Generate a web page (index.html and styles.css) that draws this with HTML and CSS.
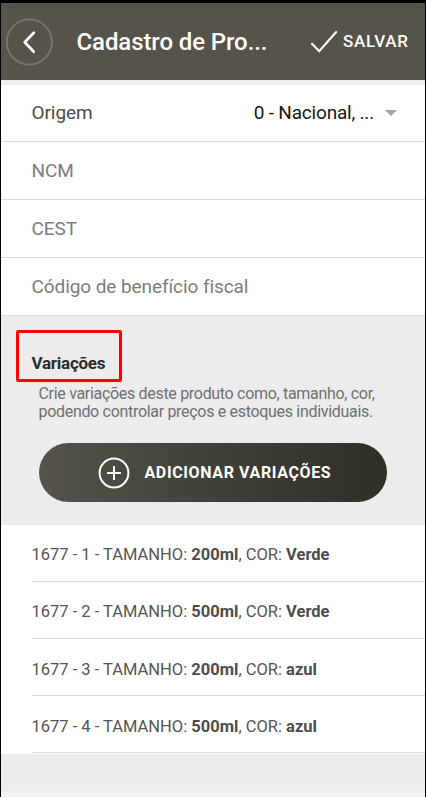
FILE: index.html
```html
<!DOCTYPE html>
<html lang="pt-BR">
<head>
<meta charset="utf-8">
<meta name="viewport" content="width=device-width">
<title>Cadastro de Produto</title>
<link rel="stylesheet" href="styles.css">
</head>
<body>
<div class="app">
  <header class="topbar">
    <button class="back" aria-label="Voltar">
      <svg width="48" height="48" viewBox="0 0 48 48" fill="none"><circle cx="24.3" cy="24" r="22.6" stroke="#79776f" stroke-width="1.8"/><path d="M28.8 14.8 19.7 24.2 28.8 33.8" stroke="#fff" stroke-width="2.7" stroke-linecap="round" stroke-linejoin="round"/></svg>
    </button>
    <h1 class="title">Cadastro de Pro...</h1>
    <button class="save">
      <svg width="28" height="24" viewBox="0 0 28 24" fill="none"><path d="M2 13.8 9.2 21.3 26.2 2" stroke="#fff" stroke-width="2.1" stroke-linecap="round"/></svg>
      <span>SALVAR</span>
    </button>
  </header>
  <section class="fields">
    <div class="field origin"><span>Origem</span><span class="value">0 - Nacional, ...</span><i class="caret"></i></div>
    <div class="field">NCM</div>
    <div class="field">CEST</div>
    <div class="field">Código de benefício fiscal</div>
  </section>
  <section class="intro">
    <div class="highlight"><h2>Variações</h2></div>
    <p>Crie variações deste produto como, tamanho, cor,<br>podendo controlar preços e estoques individuais.</p>
    <button class="add">
      <svg width="32" height="32" viewBox="0 0 32 32" fill="none" stroke="#fff" stroke-width="2"><circle cx="16" cy="16" r="14.4"/><path d="M9 16h14M16 9v14"/></svg>
      <span>ADICIONAR VARIAÇÕES</span>
    </button>
  </section>
  <ul class="variations">
    <li>1677 - 1 - TAMANHO: <b>200ml</b>, COR: <b>Verde</b></li>
    <li>1677 - 2 - TAMANHO: <b>500ml</b>, COR: <b>Verde</b></li>
    <li>1677 - 3 - TAMANHO: <b>200ml</b>, COR: <b>azul</b></li>
    <li>1677 - 4 - TAMANHO: <b>500ml</b>, COR: <b>azul</b></li>
  </ul>
  <footer class="bottom"></footer>
</div>
</body>
</html>
```
FILE: styles.css
```css
* { box-sizing: border-box; }
body { margin: 0; font-family: Roboto, "Liberation Sans", sans-serif; }
button { border: 0; padding: 0; background: none; color: #fff; font-family: inherit; }
svg { display: block; flex: none; }
.app {
  width: 426px; height: 797px; overflow: hidden;
  display: flex; flex-direction: column;
  border: solid #000; border-width: 3px 1px 0;
  background: #ececec; white-space: nowrap;
}
.topbar {
  height: 82px; flex: none; padding: 0 16.5px 0 4px;
  display: flex; align-items: center;
  background: #56534b; border-bottom: 5px solid #efeeea; color: #fff;
}
.title { margin: 0 0 0 23.5px; flex: 1; font-size: 24px; font-weight: 500; line-height: 32px; letter-spacing: -.1px; }
.save { display: flex; align-items: center; gap: 5px; font-size: 17px; font-weight: 500; letter-spacing: .65px; }
.save span { margin-bottom: 2px; }
.fields { flex: none; background: #fff; }
.field {
  height: 58px; padding: 0 28px 0 30.5px;
  display: flex; align-items: center;
  border-bottom: 1px solid #dcdcdc;
  font-size: 19px; letter-spacing: -.08px; color: #7d7d7d;
}
.origin { height: 57px; padding-bottom: 1px; color: #4c4c4c; }
.value { margin-left: auto; letter-spacing: -.2px; color: #161616; }
.caret { margin-left: 11px; border: solid transparent; border-width: 6px 6px 0; border-top-color: #a5a5a5; }
.intro { height: 209px; flex: none; padding: 14px 38px 0; }
.highlight {
  width: 106px; height: 52px; margin-left: -23px; padding: 20px 0 0 12.5px;
  border: 3px solid #fe0000; border-radius: 2px;
}
.highlight h2 { margin: 0; font-size: 17px; line-height: 20px; font-weight: 700; letter-spacing: -.25px; color: #2b2b2b; }
.intro p { margin: 3px 0 0 -.5px; font-size: 16px; line-height: 18px; letter-spacing: -.31px; color: #707070; }
.add {
  width: 348px; height: 59px; margin-top: 22px; padding-left: 59px;
  display: flex; align-items: center; gap: 14.5px;
  border-radius: 30px; background: linear-gradient(90deg, #55534b, #46463e 35%, #2f2f28);
  font-size: 16px; font-weight: 700; letter-spacing: .62px;
}
.variations { margin: 0; padding: 0 0 1px 30.5px; list-style: none; flex: none; background: #fff; }
.variations li {
  height: 57px; padding-top: 2px; line-height: 55px;
  border-bottom: 1px solid #dcdcdc; font-size: 16.5px; color: #555;
}
.variations li:nth-child(n+3) { padding-top: 3px; }
.variations b { font-weight: 700; color: #4d4d4d; }
.bottom { margin-top: auto; height: 6px; background: #f2f2f2; }
```
